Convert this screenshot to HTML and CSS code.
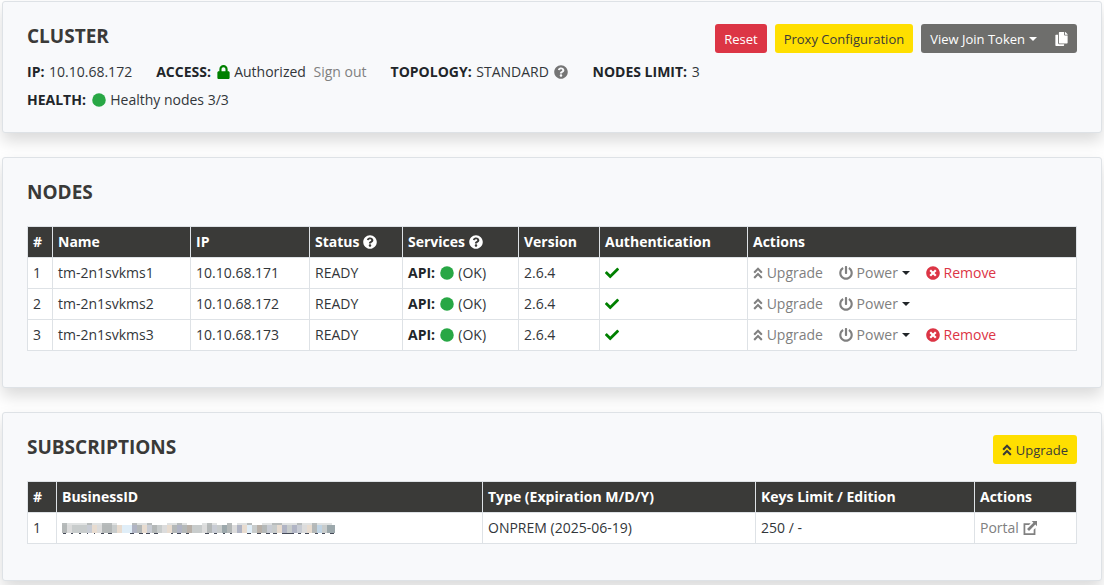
FILE: index.html
```html
<!DOCTYPE html>
<html lang="en">
<head>
    <meta charset="UTF-8">
    <meta name="viewport" content="width=device-width, initial-scale=1.0">
    <title>Cluster</title>
    <link rel="stylesheet" href="styles.css">
</head>
<body>
    <!-- shared icons -->
    <svg class="sprite" aria-hidden="true">
        <symbol id="lock" viewBox="0 0 448 512"><path d="M400 224h-24v-72C376 68.200 307.800 0 224 0S72 68.200 72 152v72H48c-26.500 0-48 21.500-48 48v192c0 26.500 21.500 48 48 48h352c26.500 0 48-21.500 48-48V272c0-26.500-21.500-48-48-48zm-104 0H152v-72c0-39.700 32.300-72 72-72s72 32.300 72 72v72z"/></symbol>
        <symbol id="question" viewBox="0 0 512 512"><path d="M504 256c0 137-111 248-248 248S8 393 8 256C8 119.100 119 8 256 8s248 111.100 248 248zM262.700 90c-54.500 0-89.300 23-116.500 63.800-3.500 5.300-2.400 12.400 2.700 16.300l34.700 26.300c5.200 3.900 12.600 3 16.700-2.100 17.900-22.700 30.100-35.800 57.300-35.800 20.400 0 45.700 13.100 45.700 33 0 15-12.400 22.700-32.500 34C247.100 238.500 216 254.900 216 296v4c0 6.600 5.400 12 12 12h56c6.600 0 12-5.400 12-12v-1.300c0-28.500 83.200-29.600 83.200-106.700 0-58-60.200-102-116.500-102zM256 338c-25.400 0-46 20.600-46 46 0 25.400 20.600 46 46 46s46-20.600 46-46c0-25.400-20.600-46-46-46z"/></symbol>
        <symbol id="circle" viewBox="0 0 512 512"><circle cx="256" cy="256" r="248"/></symbol>
        <symbol id="copy" viewBox="0 0 448 512"><path d="M320 448v40c0 13.300-10.700 24-24 24H24c-13.300 0-24-10.700-24-24V120c0-13.300 10.700-24 24-24h72v296c0 30.900 25.100 56 56 56h168zm0-344V0H152c-13.300 0-24 10.700-24 24v368c0 13.300 10.700 24 24 24h272c13.300 0 24-10.700 24-24V128H344c-13.200 0-24-10.800-24-24zm121-31L375 7A24 24 0 0 0 358 0h-6v96h96v-6.100a24 24 0 0 0-7-17z"/></symbol>
        <symbol id="check" viewBox="0 0 512 512"><path d="M173.900 439.400 7.500 273c-10-10-10-26.200 0-36.200l36.200-36.200c10-10 26.200-10 36.200 0L192 312.700 432.100 72.600c10-10 26.200-10 36.200 0l36.200 36.200c10 10 10 26.200 0 36.200L210.100 439.400c-10 10-26.200 10-36.200 0z"/></symbol>
        <symbol id="angles-up" viewBox="0 0 320 512"><path d="m177 255.700 136 136c9.400 9.400 9.400 24.600 0 33.900l-22.600 22.600c-9.400 9.400-24.600 9.400-33.900 0L160 351.900l-96.400 96.400c-9.400 9.400-24.600 9.400-33.900 0L7 425.700c-9.400-9.400-9.400-24.600 0-33.900l136-136c9.400-9.500 24.600-9.500 34-.1zm-34-192L7 199.700c-9.400 9.400-9.400 24.600 0 33.900l22.600 22.600c9.400 9.400 24.600 9.400 33.900 0l96.400-96.400 96.400 96.400c9.400 9.400 24.600 9.400 33.900 0l22.600-22.600c9.400-9.400 9.400-24.600 0-33.900l-136-136c-9.200-9.400-24.400-9.400-33.800 0z"/></symbol>
        <symbol id="power" viewBox="0 0 512 512"><path d="M400 54.100c63 45 104 118.600 104 201.900 0 136.800-110.800 247.700-247.500 248C120 504.300 8.200 393 8 256.400 7.900 173.100 48.900 99.300 111.800 54.200c11.700-8.300 28-4.800 35 7.700L162.600 90c5.900 10.500 3.100 23.800-6.600 31-41.500 30.800-68 79.600-68 134.900-.1 92.300 74.500 168.100 168 168.100 91.600 0 168.600-74.200 168-169.100-.3-51.800-24.700-101.800-68.100-134-9.700-7.200-12.400-20.500-6.500-30.900l15.800-28.100c7-12.400 23.200-16.100 34.800-7.800zM296 264V24c0-13.300-10.700-24-24-24h-32c-13.300 0-24 10.700-24 24v240c0 13.300 10.700 24 24 24h32c13.300 0 24-10.700 24-24z"/></symbol>
        <symbol id="times" viewBox="0 0 512 512"><path d="M256 8C119 8 8 119 8 256s111 248 248 248 248-111 248-248S393 8 256 8zm121.600 313.100c4.700 4.700 4.700 12.300 0 17L338 377.600c-4.700 4.700-12.300 4.700-17 0L256 312l-65.100 65.600c-4.700 4.700-12.300 4.700-17 0L134.400 338c-4.700-4.700-4.700-12.300 0-17l65.600-65-65.600-65.100c-4.700-4.700-4.700-12.300 0-17l39.600-39.600c4.700-4.700 12.300-4.700 17 0l65 65.700 65.100-65.600c4.700-4.700 12.300-4.700 17 0l39.600 39.600c4.700 4.700 4.700 12.300 0 17L312 256l65.600 65.100z"/></symbol>
        <symbol id="external" viewBox="0 0 512 512"><path d="M280 78H20v434h434V260l-64 56v132H84V142h136zM320 0h192v192l-60-60-232 232-72-72L380 60z"/></symbol>
    </svg>

    <main class="page">
        <section class="card">
            <div class="card-header">
                <h2>Cluster</h2>
                <div class="toolbar">
                    <button type="button" class="btn btn-danger">Reset</button>
                    <button type="button" class="btn btn-warning">Proxy Configuration</button>
                    <div class="btn-group">
                        <button type="button" class="btn btn-dark caret">View Join Token</button>
                        <button type="button" class="btn btn-dark" aria-label="Copy token"><svg class="icon icon-narrow"><use href="#copy"/></svg></button>
                    </div>
                </div>
            </div>
            <div class="info">
                <span><b>IP:</b> 10.10.68.172</span>
                <span><b>ACCESS:</b> <svg class="icon icon-narrow access"><use href="#lock"/></svg> Authorized <a href="#" class="sign-out">Sign out</a></span>
                <span><b>TOPOLOGY:</b> STANDARD <svg class="icon muted"><use href="#question"/></svg></span>
                <span><b>NODES LIMIT:</b> 3</span>
            </div>
            <div class="info">
                <span><b>HEALTH:</b> <svg class="icon ok"><use href="#circle"/></svg> Healthy nodes 3/3</span>
            </div>
        </section>

        <section class="card">
            <div class="card-header table-header">
                <h2>Nodes</h2>
            </div>
            <table>
                <colgroup>
                    <col class="w-24"><col class="w-138"><col class="w-119"><col class="w-93">
                    <col class="w-116"><col class="w-81"><col class="w-148"><col>
                </colgroup>
                <thead>
                    <tr>
                        <th>#</th>
                        <th>Name</th>
                        <th>IP</th>
                        <th>Status <svg class="icon"><use href="#question"/></svg></th>
                        <th>Services <svg class="icon"><use href="#question"/></svg></th>
                        <th>Version</th>
                        <th>Authentication</th>
                        <th>Actions</th>
                    </tr>
                </thead>
                <tbody>
                    <tr>
                        <td>1</td>
                        <td>tm-2n1svkms1</td>
                        <td>10.10.68.171</td>
                        <td>READY</td>
                        <td><b>API:</b> <svg class="icon ok"><use href="#circle"/></svg> (OK)</td>
                        <td>2.6.4</td>
                        <td><svg class="icon access"><use href="#check"/></svg></td>
                        <td>
                            <div class="actions">
                                <a href="#"><svg class="icon icon-slim"><use href="#angles-up"/></svg> Upgrade</a>
                                <a href="#" class="caret"><svg class="icon"><use href="#power"/></svg> Power</a>
                                <a href="#" class="danger"><svg class="icon"><use href="#times"/></svg> Remove</a>
                            </div>
                        </td>
                    </tr>
                    <tr>
                        <td>2</td>
                        <td>tm-2n1svkms2</td>
                        <td>10.10.68.172</td>
                        <td>READY</td>
                        <td><b>API:</b> <svg class="icon ok"><use href="#circle"/></svg> (OK)</td>
                        <td>2.6.4</td>
                        <td><svg class="icon access"><use href="#check"/></svg></td>
                        <td>
                            <div class="actions">
                                <a href="#"><svg class="icon icon-slim"><use href="#angles-up"/></svg> Upgrade</a>
                                <a href="#" class="caret"><svg class="icon"><use href="#power"/></svg> Power</a>
                            </div>
                        </td>
                    </tr>
                    <tr>
                        <td>3</td>
                        <td>tm-2n1svkms3</td>
                        <td>10.10.68.173</td>
                        <td>READY</td>
                        <td><b>API:</b> <svg class="icon ok"><use href="#circle"/></svg> (OK)</td>
                        <td>2.6.4</td>
                        <td><svg class="icon access"><use href="#check"/></svg></td>
                        <td>
                            <div class="actions">
                                <a href="#"><svg class="icon icon-slim"><use href="#angles-up"/></svg> Upgrade</a>
                                <a href="#" class="caret"><svg class="icon"><use href="#power"/></svg> Power</a>
                                <a href="#" class="danger"><svg class="icon"><use href="#times"/></svg> Remove</a>
                            </div>
                        </td>
                    </tr>
                </tbody>
            </table>
        </section>

        <section class="card">
            <div class="card-header table-header">
                <h2>Subscriptions</h2>
                <div class="toolbar">
                    <button type="button" class="btn btn-warning"><svg class="icon icon-slim"><use href="#angles-up"/></svg> Upgrade</button>
                </div>
            </div>
            <table>
                <colgroup>
                    <col class="w-28"><col><col class="w-273"><col class="w-219"><col class="w-102">
                </colgroup>
                <thead>
                    <tr>
                        <th>#</th>
                        <th>BusinessID</th>
                        <th>Type (Expiration M/D/Y)</th>
                        <th>Keys Limit / Edition</th>
                        <th>Actions</th>
                    </tr>
                </thead>
                <tbody>
                    <tr>
                        <td>1</td>
                        <td>
                            <!-- hidden id, drawn as a mosaic -->
                            <svg class="mosaic" viewBox="0 0 275 11" role="img" aria-label="Hidden">
                                <path class="mosaic-top" d="M0 1h55M75 1h15M105 1h20M140 1h15M175 1h15M200 1h15M220 1h50"/>
                                <path class="mosaic-shade" d="M0 1h5M25 1h5M40 1h10M70 1h5M85 1h5M115 1h5M145 1h5M165 1h5M185 1h5M210 1h10M235 1h5M250 1h5"/>
                                <g class="mosaic-row">
                                    <path stroke="#b4b8b8" d="M0 6h5M40 6h10M75 6h5M90 6h5M110 6h5M120 6h5M145 6h5M165 6h5M200 6h5M250 6h5"/>
                                    <path stroke="#dcdcdc" d="M5 6h5M35 6h5M100 6h5M140 6h5M170 6h5M240 6h5"/>
                                    <path stroke="#c8cccc" d="M10 6h15M50 6h5M95 6h5M130 6h10M155 6h5M190 6h5M210 6h5M225 6h5M260 6h5"/>
                                    <path stroke="#c8ccd4" d="M25 6h5M85 6h5M150 6h5M205 6h5M235 6h5"/>
                                    <path stroke="#e8dcd0" d="M30 6h5M55 6h5M80 6h5M105 6h5M180 6h5M215 6h5M245 6h5"/>
                                    <path stroke="#e0eef8" d="M60 6h10M185 6h5"/>
                                    <path stroke="#b0b4c4" d="M70 6h5M115 6h5M175 6h5M220 6h5M230 6h5"/>
                                    <path stroke="#9ca8ac" d="M160 6h5M265 6h8"/>
                                    <path stroke="#b8b0a8" d="M125 6h5M195 6h5"/>
                                    <path stroke="#c0d4e4" d="M255 6h5"/>
                                </g>
                                <path class="mosaic-edge" d="M1 10h3M9 10h2M17 10h2M25 10h1M32 10h1M39 10h3M46 10h4M68 10h4M77 10h4M84 10h4M92 10h4M109 10h2M115 10h4M124 10h3M143 10h4M152 10h3M161 10h2M168 10h2M185 10h4M195 10h4M204 10h4M211 10h4M220 10h12M236 10h3M243 10h4M253 10h3M260 10h3M268 10h4"/>
                            </svg>
                        </td>
                        <td>ONPREM (2025-06-19)</td>
                        <td>250 / -</td>
                        <td><a href="#">Portal <svg class="icon"><use href="#external"/></svg></a></td>
                    </tr>
                </tbody>
            </table>
        </section>
    </main>
</body>
</html>
```

FILE: styles.css
```css
* {
    box-sizing: border-box;
}

body {
    margin: 0;
    background-color: #fff;
    color: #32363a;
    font-family: 'Segoe UI', 'Open Sans', 'Noto Sans', sans-serif;
    font-size: 14px;
    line-height: 20px;
}

a {
    color: #808080;
    text-decoration: none;
}

b {
    color: #212529;
    font-weight: 700;
}

.sprite {
    display: none;
}

.page {
    display: flex;
    flex-direction: column;
    gap: 24px;
    padding: 1px 2px 4px;
}

.card {
    padding: 22px 24px;
    background-color: #f8f9fb;
    border: 1px solid #dee2e6;
    border-radius: 3px;
    box-shadow: 0 8px 16px rgba(0, 0, 0, 0.15);
}

.card-header {
    display: flex;
    justify-content: space-between;
    align-items: flex-start;
    height: 30px;
    margin-bottom: 8px;
}

.table-header {
    margin-bottom: 16px;
}

h2 {
    margin: 0;
    color: #3a3a38;
    font-size: 19px;
    font-weight: 700;
    line-height: 24px;
    text-transform: uppercase;
}

/* buttons */
.toolbar {
    display: flex;
    gap: 8px;
}

.btn-group {
    display: flex;
}

.btn {
    height: 29px;
    padding: 0 9px;
    border: 0;
    border-radius: 3px;
    font-family: inherit;
    font-size: 13px;
    line-height: 20px;
}

.btn-danger {
    background-color: #dc3545;
    color: #fff;
}

.btn-warning {
    background-color: #ffdf00;
    color: #3a3a38;
}

.btn-dark {
    background-color: #6e6e6c;
    color: #fff;
}

.btn-group .btn:first-child {
    border-radius: 3px 0 0 3px;
}

.btn-group .btn:last-child {
    border-radius: 0 3px 3px 0;
}

.caret::after {
    content: '';
    display: inline-block;
    margin-left: 4px;
    vertical-align: 3px;
    border: 4px solid transparent;
    border-top-color: #212529;
    border-bottom: 0;
}

.btn.caret::after {
    border-top-color: #fff;
}

/* icons */
.icon {
    width: 14px;
    height: 14px;
    fill: currentColor;
    vertical-align: -2px;
}

.icon-narrow {
    width: 13px;
}

.icon-slim {
    width: 10px;
}

.ok {
    color: #28a745;
}

.access {
    color: #008000;
}

.muted {
    color: #757575;
}

.danger {
    color: #dc3545;
}

.info {
    display: flex;
    flex-wrap: wrap;
    gap: 24px;
}

.info + .info {
    margin-top: 8px;
}

.info b,
.info .icon,
td .ok {
    margin-right: 1px;
}

.info .icon,
td .ok {
    margin-left: 1px;
}

.sign-out {
    margin-left: 4px;
}

/* tables */
table {
    width: 100%;
    margin-bottom: 14px;
    border-collapse: collapse;
    table-layout: fixed;
    background-color: #fff;
}

th,
td {
    height: 31px;
    padding: 5px;
    border: 1px solid #dee2e6;
    text-align: left;
    white-space: nowrap;
}

th {
    background-color: #3a3a38;
    color: #fff;
    font-weight: 700;
}

.w-24 { width: 25px; }
.w-28 { width: 29px; }
.w-81 { width: 81px; }
.w-93 { width: 93px; }
.w-102 { width: 102px; }
.w-116 { width: 116px; }
.w-119 { width: 119px; }
.w-138 { width: 138px; }
.w-148 { width: 148px; }
.w-219 { width: 219px; }
.w-273 { width: 273px; }

.actions {
    display: flex;
    gap: 16px;
}

.mosaic {
    display: block;
    width: 275px;
    height: 11px;
    shape-rendering: crispEdges;
}

.mosaic-top {
    stroke: #e0e2e2;
    stroke-width: 2px;
}

.mosaic-shade {
    stroke: #b8bcbc;
    stroke-width: 2px;
}

.mosaic-row {
    stroke-width: 8px;
}

.mosaic-edge {
    stroke: #454a58;
    stroke-width: 1px;
}
```
